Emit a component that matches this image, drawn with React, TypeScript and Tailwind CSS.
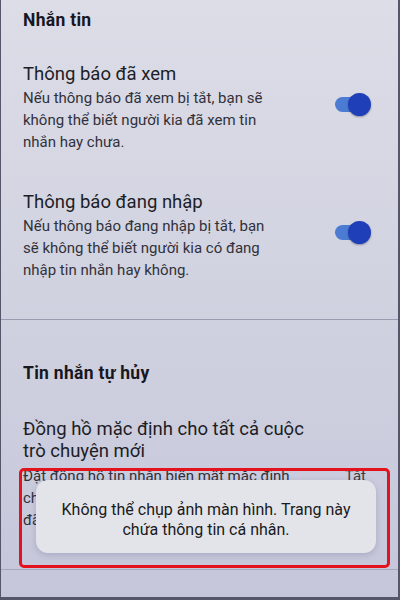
import React from "react";

function Toggle() {
  return (
    <div className="relative w-[36px] h-[24px] shrink-0">
      <div className="absolute left-0 top-[4px] w-[30px] h-[15px] rounded-full bg-[#4c7bd4]" />
      <div className="absolute right-0 top-0 w-[23px] h-[23px] rounded-full bg-[#1f3fb9] shadow-[0_1px_2px_rgba(0,0,40,0.35)]" />
    </div>
  );
}

function ToggleItem({ title, lines }: { title: string; lines: string[] }) {
  return (
    <div className="flex items-center pr-[27px]">
      <div className="flex-1">
        <div className="text-[18.5px] leading-[23px] text-[#1d1d25]">{title}</div>
        <div className="text-[15px] leading-[22px] text-[#31313b] mt-[1px]">
          {lines.map((l, i) => (
            <div key={i}>{l}</div>
          ))}
        </div>
      </div>
      <div className="mt-[-6px]">
        <Toggle />
      </div>
    </div>
  );
}

export default function App() {
  return (
    <div
      className="relative w-[400px] h-[600px] overflow-hidden bg-linear-to-b from-[#dcdde7] via-[#d1d2e0] to-[#c5c6da] border-l border-r-[2px] border-b-[3px] border-[#55566a]"
      style={{ fontFamily: "Roboto, 'Noto Sans', sans-serif" }}
    >
      <div className="pl-[22px] pt-[10px]">
        <div className="text-[17.5px] leading-[20px] tracking-[0.3px] font-bold text-[#17171f]">Nhắn tin</div>
        <div className="mt-[33px]">
          <ToggleItem
            title="Thông báo đã xem"
            lines={[
              "Nếu thông báo đã xem bị tắt, bạn sẽ",
              "không thể biết người kia đã xem tin",
              "nhắn hay chưa.",
            ]}
          />
        </div>
        <div className="mt-[38px]">
          <ToggleItem
            title="Thông báo đang nhập"
            lines={[
              "Nếu thông báo đang nhập bị tắt, bạn",
              "sẽ không thể biết người kia có đang",
              "nhập tin nhắn hay không.",
            ]}
          />
        </div>
      </div>
      <div className="mt-[38px] h-[1px] bg-[#9a9bb0]" />
      <div className="pl-[22px] pr-[22px] pt-[43px]">
        <div className="text-[17.5px] leading-[20px] tracking-[0.3px] font-bold text-[#17171f]">Tin nhắn tự hủy</div>
        <div className="mt-[35px] text-[18.5px] leading-[22px] text-[#1d1d25]">
          <div>Đồng hồ mặc định cho tất cả cuộc</div>
          <div>trò chuyện mới</div>
        </div>
        <div className="flex text-[15px] leading-[22px] text-[#31313b] mt-[3px]">
          <div className="flex-1">
            <div>Đặt đồng hồ tin nhắn biến mất mặc định</div>
            <div>cho tất cả cuộc trò chuyện mới bạn</div>
            <div>đã bắt đầu.</div>
          </div>
          <div className="pr-[10px] text-[#3a3a44]">Tắt</div>
        </div>
      </div>
      <div className="mt-[38px] h-[1px] bg-[#a8a9bc]" />

      {/* Toast */}
      <div className="absolute left-[35px] top-[480px] w-[340px] h-[73px] rounded-[12px] bg-[#e3e4ea] shadow-[0_2px_6px_rgba(40,40,70,0.18)] flex items-center justify-center">
        <div className="text-center text-[16px] leading-[20px] text-[#1a1a20] pt-[6px]">
          <div>Không thể chụp ảnh màn hình. Trang này</div>
          <div>chứa thông tin cá nhân.</div>
        </div>
      </div>

      {/* Red highlight box */}
      <div className="absolute left-[18px] top-[468px] w-[371px] h-[100px] rounded-[5px] border-[3px] border-[#e3121c]" />
    </div>
  );
}
